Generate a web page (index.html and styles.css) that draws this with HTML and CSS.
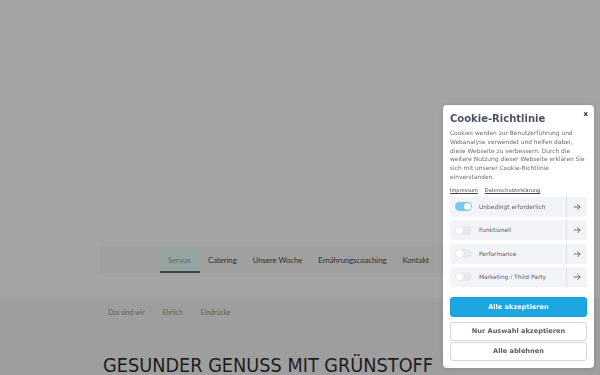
FILE: index.html
```html
<!DOCTYPE html>
<html lang="de">
<head>
<meta charset="utf-8">
<title>Grünstoff</title>
<link rel="stylesheet" href="styles.css">
</head>
<body>
<header class="hero">
  <nav class="mainnav">
    <a class="nav-item active">Servus</a>
    <a class="nav-item">Catering</a>
    <a class="nav-item">Unsere Woche</a>
    <a class="nav-item">Ernährungscoaching</a>
    <a class="nav-item">Kontakt</a>
  </nav>
</header>
<main class="content">
  <nav class="subnav">
    <a>Das sind wir</a>
    <a>Ehrlich</a>
    <a>Eindrücke</a>
  </nav>
  <h1 class="headline">GESUNDER GENUSS MIT GRÜNSTOFF</h1>
</main>

<aside class="cookie">
  <button class="close">x</button>
  <h2 class="cookie-title">Cookie-Richtlinie</h2>
  <p class="cookie-text">Cookies werden zur Benutzerführung und Webanalyse verwendet und helfen dabei, diese Webseite zu verbessern. Durch die weitere Nutzung dieser Webseite erklären Sie sich mit unserer Cookie-Richtlinie einverstanden.</p>
  <div class="cookie-links"><a>Impressum</a><a>Datenschutzerklärung</a></div>
  <div class="rows">
    <div class="row"><span class="toggle on"></span><span class="label">Unbedingt erforderlich</span><span class="arrow"><svg viewBox="0 0 10 10" width="8" height="8"><path d="M1 5H9M5.5 1.5L9 5L5.5 8.5" fill="none" stroke="currentColor" stroke-width="1.1"/></svg></span></div>
    <div class="row"><span class="toggle"></span><span class="label">Funktionell</span><span class="arrow"><svg viewBox="0 0 10 10" width="8" height="8"><path d="M1 5H9M5.5 1.5L9 5L5.5 8.5" fill="none" stroke="currentColor" stroke-width="1.1"/></svg></span></div>
    <div class="row"><span class="toggle"></span><span class="label">Performance</span><span class="arrow"><svg viewBox="0 0 10 10" width="8" height="8"><path d="M1 5H9M5.5 1.5L9 5L5.5 8.5" fill="none" stroke="currentColor" stroke-width="1.1"/></svg></span></div>
    <div class="row"><span class="toggle"></span><span class="label">Marketing / Third Party</span><span class="arrow"><svg viewBox="0 0 10 10" width="8" height="8"><path d="M1 5H9M5.5 1.5L9 5L5.5 8.5" fill="none" stroke="currentColor" stroke-width="1.1"/></svg></span></div>
  </div>
  <button class="btn primary">Alle akzeptieren</button>
  <button class="btn outline first">Nur Auswahl akzeptieren</button>
  <button class="btn outline">Alle ablehnen</button>
</aside>
</body>
</html>
```

FILE: styles.css
```css
* { box-sizing: border-box; }
html, body { margin: 0; padding: 0; }
body {
  width: 600px;
  height: 375px;
  overflow: hidden;
  background: #a3a3a3;
  font-family: "Lato", "Open Sans", sans-serif;
}
.hero {
  height: 298px;
  padding-top: 246px;
  background: #a4a4a4;
}
.mainnav {
  display: flex;
  margin-left: 100px;
  width: 360px;
  height: 27px;
  padding-left: 60px;
  background: #a0a0a0;
}
.nav-item {
  display: flex;
  align-items: center;
  padding: 0 8px;
  font-size: 7.7px;
  color: #2e2e2e;
  white-space: nowrap;
}
.nav-item.active {
  width: 40px;
  background: #95a5a2;
  color: #5c6664;
  border-bottom: 2px solid #3e4644;
  padding-top: 2px;
}
.content {
  background: #9e9e9e;
  height: 77px;
  padding: 10px 0 0 108px;
}
.subnav {
  display: flex;
  gap: 18px;
  font-size: 6.8px;
  color: #5e5e5e;
}
.headline {
  margin: 42px 0 0 -5px;
  font-family: "DejaVu Sans Condensed", "Liberation Sans Narrow", sans-serif;
  font-weight: normal;
  font-size: 19.7px;
  line-height: 16px;
  color: #1d1d1d;
  white-space: nowrap;
}

.cookie {
  position: fixed;
  left: 443px;
  top: 105px;
  width: 151px;
  height: 263px;
  background: #fff;
  border-radius: 4px;
  box-shadow: 0 0 4px rgba(0,0,0,0.15);
  padding: 7px 7px 0 7px;
  font-family: "DejaVu Sans", sans-serif;
  color: #6a6e77;
}
.close {
  position: absolute;
  right: 6px;
  top: 5px;
  border: 0;
  background: none;
  padding: 0;
  font-family: "DejaVu Sans", sans-serif;
  font-weight: bold;
  font-size: 7px;
  color: #222;
}
.cookie-title {
  margin: 0;
  font-size: 10px;
  line-height: 13px;
  font-weight: bold;
  color: #4e5361;
}
.cookie-text {
  margin: 4px 0 0 0;
  font-size: 5.9px;
  line-height: 8.8px;
}
.cookie-links {
  display: flex;
  gap: 7px;
  margin-top: 5px;
  font-size: 5px;
  line-height: 7px;
  color: #444;
}
.cookie-links a { text-decoration: underline; }
.rows {
  margin-top: 3px;
  display: flex;
  flex-direction: column;
  gap: 3.4px;
}
.row {
  display: flex;
  align-items: center;
  height: 20px;
  background: #f3f4f7;
  border-radius: 3px;
  padding-left: 5px;
}
.toggle {
  position: relative;
  width: 17px;
  height: 9px;
  border-radius: 5px;
  background: #e8e9ed;
  flex: none;
}
.toggle::after {
  content: "";
  position: absolute;
  left: 1px;
  top: 1px;
  width: 7px;
  height: 7px;
  border-radius: 50%;
  background: #fff;
}
.toggle.on { background: #79c8ea; }
.toggle.on::after { left: 9px; }
.label {
  flex: 1;
  margin-left: 7px;
  font-size: 5.9px;
  color: #5a5e68;
}
.arrow {
  width: 21px;
  height: 100%;
  display: flex;
  align-items: center;
  justify-content: center;
  border-left: 1px solid #dcdee4;
  color: #555a64;
}
.btn {
  display: block;
  width: 100%;
  height: 20px;
  border-radius: 3px;
  font-family: "DejaVu Sans", sans-serif;
  font-weight: bold;
  font-size: 6.6px;
  padding: 0;
}
.btn.primary {
  margin-top: 10px;
  background: #1da7e0;
  border: 1px solid #1a9bd2;
  color: #fff;
}
.btn.outline {
  background: #fff;
  border: 1px solid #d3d6dd;
  color: #5a5e68;
  height: 19px;
}
.btn.first { margin-top: 5px; margin-bottom: 1px; }
```
